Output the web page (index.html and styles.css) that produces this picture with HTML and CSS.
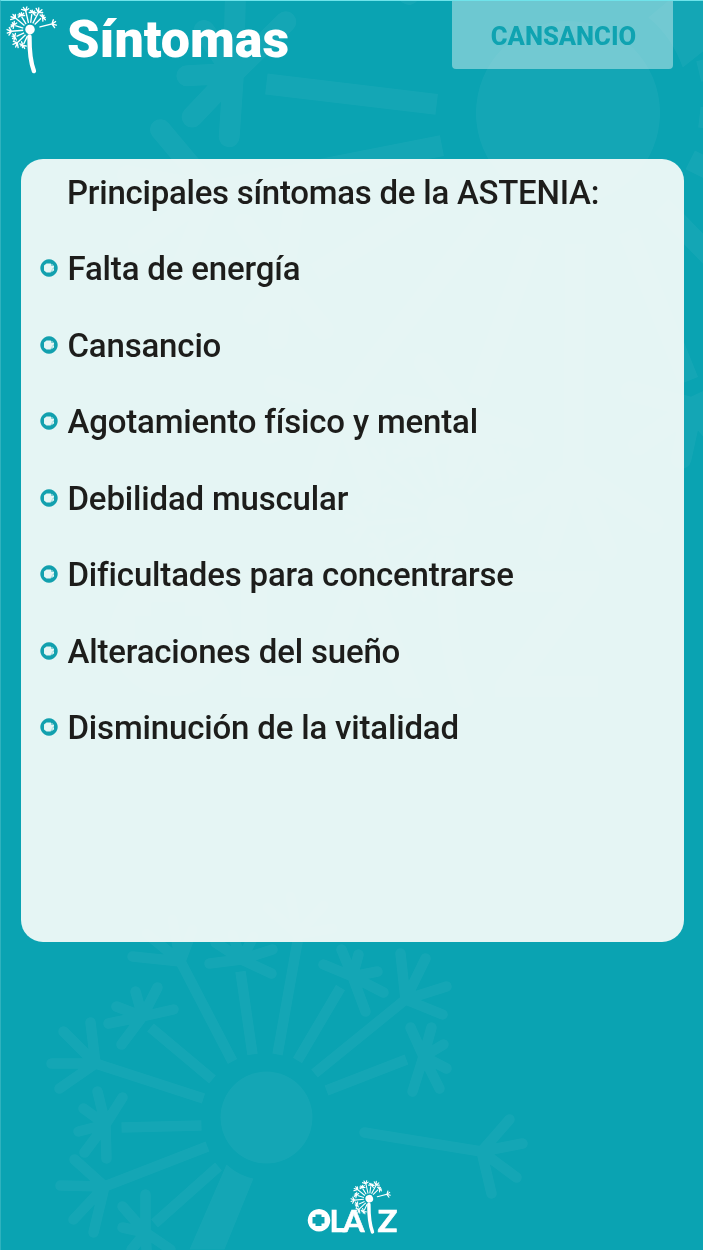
FILE: index.html
```html
<!DOCTYPE html>
<html lang="es">
<head>
  <meta charset="UTF-8" />
  <meta name="viewport" content="width=device-width, initial-scale=1.0" />
  <title>Síntomas | Olaiz</title>
  <link rel="stylesheet" href="styles.css">
</head>
<body>

  <!-- Fondo: dientes de león -->
  <svg class="fondo" viewBox="0 0 703 1250" aria-hidden="true">
    <defs>
      <g id="semillas">
        <circle r="46" fill="#fff" stroke="none" />
        <g stroke-linecap="butt">
          <path d="M-86-156L-34-56M-26-146L-14-63M31-176L11-63M74-130L31-57M139-118L48-44M140-58L60-27M-171-54L-63-19M-116-90L-54-38M-145 10L-65 8M-162 69L-59 29M-112 106L-48 49" />
        </g>
        <path d="M-86-156L-134-161M-86-156L-94-198M-86-156L-120-184M-86-156L-74-188" />
        <path d="M-25-158L-57-154M-25-158L-51-175M-25-158L-34-183M-25-158L-13-181M-25-158L6-168M-25-158L5-144" />
        <path d="M31-183L1-210M31-183L24-221M31-183L57-212M31-183L66-189M31-183V-176" />
        <path d="M86-141L99-106M86-141L117-125M86-141L111-146M86-141L92-163M86-141L75-168M86-141L57-153" />
        <path d="M139-118L134-164M139-118L159-159M139-118L180-131M139-118L176-103" />
        <path d="M157-61L144-90M157-61L165-90M157-61L177-73M157-61L180-49M157-61L173-29M157-61L146-26" />
        <path d="M-171-54L-176-95M-171-54L-203-86M-171-54H-215M-171-54L-207-29" />
        <path d="M-124-101L-145-73M-124-101L-158-94M-124-101L-150-111M-124-101L-131-126M-124-101L-109-130M-124-101L-93-108" />
        <path d="M-161 7L-169-26M-161 7L-144-20M-161 7L-183-9M-161 7L-188 14M-161 7L-182 35M-161 7L-160 41" />
        <path d="M-162 69L-192 42M-162 69L-206 68M-162 69L-193 102M-162 69L-173 115" />
        <path d="M-121 115V77M-121 115L-144 89M-121 115L-144 110M-121 115L-135 132M-121 115L-96 132M-121 115L-119 148" />
        <path d="M98 15L215 34L243 2M215 34L256 26M215 34L250 60M215 34L225 76" />
      </g>
      <g id="diente">
        <use href="#semillas" transform="rotate(-23)" />
        <path d="M-5 67C-6 190 0 300 38 400" stroke-width="42" />
      </g>
      <g id="olaiz">
        <path class="aro" fill-rule="evenodd" d="M14 29a11.300 11.300 0 1 0 .01 0ZM10.500 34.500H16.500V37H19.500V43.500H16.500V46H10.500V43.500H7.500V37H10.500Z" />
        <path d="M17.500 35H19V36.500H20.500V39.500M20.500 41.500V44H18.500V45.500" stroke-width=".7" stroke-linecap="butt" />
        <text x="24.500" y="51.500" textLength="35">LA</text>
        <text x="72.500" y="51.500" textLength="20" lengthAdjust="spacingAndGlyphs">Z</text>
        <path d="M29 50H42" stroke-width="3.500" stroke-linecap="butt" />
        <g transform="translate(64.300 18.700) scale(.083)" stroke-width="13"><use href="#diente" /></g>
      </g>
      <g id="vineta">
        <path class="aro" fill-rule="evenodd" d="M9 .3a8.700 8.700 0 1 0 .01 0ZM6.500 4.500H10.500L12 5.200L14 6.500V11.500L12 12.800L10.500 13.500H6.500L4 11.500V6.500Z" />
        <path d="M11.500 4.500V6.500H13.500M14 8.500L12.500 10.200M11 13L12 11.500" stroke-width=".5" />
      </g>
    </defs>
    <g class="marca">
      <g stroke-width="10.500" transform="translate(266.500 1117.500)">
        <use href="#semillas" />
        <path d="M-40 47Q-28 58-13 61L-42 132H-77Z" fill="#fff" stroke="none" />
      </g>
      <g stroke-width="10.500" transform="translate(568 113) rotate(208) scale(2)">
        <use href="#semillas" />
        <path d="M-40 47Q-28 58-13 61L-42 132H-77Z" fill="#fff" stroke="none" />
      </g>
      <use href="#olaiz" transform="translate(94 413) scale(5.500)" />
    </g>
  </svg>

  <header class="cabecera">
    <svg class="logo" viewBox="0 0 62 80" aria-hidden="true">
      <g transform="translate(30 29.500) scale(.104)" stroke-width="13"><use href="#diente" /></g>
    </svg>
    <h1>Síntomas</h1>
    <div class="etiqueta">CANSANCIO</div>
  </header>

  <main class="tarjeta">
    <h2>Principales síntomas de la ASTENIA:</h2>
    <ul class="lista">
      <li><svg class="vineta" viewBox="0 0 18 18"><use href="#vineta" /></svg>Falta de energía</li>
      <li><svg class="vineta" viewBox="0 0 18 18"><use href="#vineta" /></svg>Cansancio</li>
      <li><svg class="vineta" viewBox="0 0 18 18"><use href="#vineta" /></svg>Agotamiento físico y mental</li>
      <li><svg class="vineta" viewBox="0 0 18 18"><use href="#vineta" /></svg>Debilidad muscular</li>
      <li><svg class="vineta" viewBox="0 0 18 18"><use href="#vineta" /></svg>Dificultades para concentrarse</li>
      <li><svg class="vineta" viewBox="0 0 18 18"><use href="#vineta" /></svg>Alteraciones del sueño</li>
      <li><svg class="vineta" viewBox="0 0 18 18"><use href="#vineta" /></svg>Disminución de la vitalidad</li>
    </ul>
  </main>

  <footer class="pie">
    <svg class="olaiz" viewBox="0 0 94 56" role="img" aria-label="Olaiz"><use href="#olaiz" /></svg>
  </footer>

</body>
</html>
```
FILE: styles.css
```css
* {
  box-sizing: border-box;
}
body {
  margin: 0;
  width: 703px;
  height: 1250px;
  overflow: hidden;
  position: relative;
  display: flex;
  flex-direction: column;
  background: #0aa3b2;
  border-top: 1px solid #6fe3ea;
  border-left: 1px solid #2fb2be;
  font-family: Roboto, sans-serif;
  color: #1d1d1b;
}
.fondo {
  position: absolute;
  top: -1px;
  left: -1px;
  width: 703px;
  height: 1250px;
  z-index: -1;
}
svg {
  display: block;
  fill: none;
  stroke: #fff;
  stroke-linecap: round;
}
svg text {
  fill: #fff;
  stroke: #fff;
  stroke-width: 0.6px;
  font: 700 31px Lato, sans-serif;
}
.aro {
  fill: currentColor;
  stroke: none;
}
.marca {
  opacity: 0.045;
  color: #fff;
}
.cabecera {
  display: flex;
  align-items: flex-start;
  height: 158px;
  padding-right: 30px;
}
.logo {
  width: 62px;
  height: 80px;
  margin: -1px 5px 0 -1px;
}
h1 {
  margin: 11px 0 0;
  color: #fff;
  font-size: 52px;
  line-height: 56px;
  font-weight: 900;
}
.etiqueta {
  width: 221px;
  height: 68px;
  margin-left: auto;
  padding-left: 2px;
  border-radius: 0 0 4px 4px;
  background: rgba(217, 240, 242, 0.48);
  color: #0fa3b1;
  font-size: 25.6px;
  font-weight: 800;
  line-height: 70px;
  text-align: center;
}
.tarjeta {
  width: 663px;
  height: 782.5px;
  margin-left: 19.5px;
  padding: 14px 19px 0;
  border-radius: 22px;
  background: rgba(253, 254, 251, 0.9);
}
h2,
.lista li {
  margin: 0;
  font-size: 33px;
  font-weight: 500;
  line-height: 40px;
  letter-spacing: -0.17px;
  white-space: nowrap;
}
h2 {
  padding-left: 27.5px;
  letter-spacing: -0.25px;
}
.lista {
  list-style: none;
  margin: 36px 0 0;
  padding: 0;
  display: flex;
  flex-direction: column;
  gap: 36.5px;
}
.lista li {
  display: flex;
  align-items: center;
  gap: 10px;
}
.vineta {
  width: 18px;
  height: 18px;
  margin-top: -2px;
  color: #12a0ae;
  stroke: #12a0ae;
}
.pie {
  margin-top: auto;
  height: 70px;
  padding-left: 304px;
}
.olaiz {
  width: 94px;
  height: 56px;
  color: #fff;
}
```
